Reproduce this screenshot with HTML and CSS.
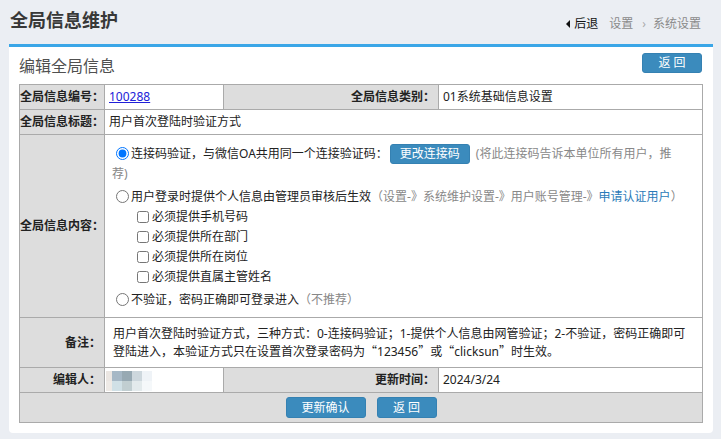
FILE: index.html
```html
<!DOCTYPE html>
<html lang="zh-CN">
  <head>
    <title>全局信息维护</title>
    <meta charset="utf-8">
    <link rel="stylesheet" href="styles.css">
  </head>
  <body>
    <div class="top">
      <h1>全局信息维护</h1>
      <div class="crumb">
        <a class="back"><i></i>后退</a>
        <span>设置</span>
        <span class="sep">›</span>
        <span>系统设置</span>
      </div>
    </div>
    <div class="box">
      <div class="box-head">
        <h2>编辑全局信息</h2>
        <span class="btn btn-top">返 回</span>
      </div>
      <table class="frm">
        <colgroup>
          <col style="width:85px">
          <col style="width:119px">
          <col style="width:215px">
          <col style="width:264px">
        </colgroup>
        <tr>
          <td class="lbl">全局信息编号：</td>
          <td><a href="#" class="id">100288</a></td>
          <td class="lbl">全局信息类别：</td>
          <td>01系统基础信息设置</td>
        </tr>
        <tr>
          <td class="lbl">全局信息标题：</td>
          <td colspan="3">用户首次登陆时验证方式</td>
        </tr>
        <tr>
          <td class="lbl">全局信息内容：</td>
          <td colspan="3" class="opts">
            <div class="opt">
              <input type="radio" name="mode" checked>连接码验证，与微信OA共用同一个连接验证码：<span class="btn btn-code">更改连接码</span><span class="tip">(将此连接码告诉本单位所有用户，推<br>荐)</span>
            </div>
            <div class="opt sp">
              <input type="radio" name="mode">用户登录时提供个人信息由管理员审核后生效<span class="tip">（设置-》系统维护设置-》用户账号管理-》<a class="blue">申请认证用户</a>）</span>
            </div>
            <div class="chk"><input type="checkbox">必须提供手机号码</div>
            <div class="chk"><input type="checkbox">必须提供所在部门</div>
            <div class="chk"><input type="checkbox">必须提供所在岗位</div>
            <div class="chk"><input type="checkbox">必须提供直属主管姓名</div>
            <div class="opt sp">
              <input type="radio" name="mode">不验证，密码正确即可登录进入<span class="tip">（不推荐）</span>
            </div>
          </td>
        </tr>
        <tr>
          <td class="lbl">备注：</td>
          <td colspan="3" class="note">用户首次登陆时验证方式，三种方式：0-连接码验证；1-提供个人信息由网管验证；2-不验证，密码正确即可登陆进入，本验证方式只在设置首次登录密码为<span class="q">“</span>123456<span class="q">”</span>或<span class="q">“</span>clicksun<span class="q">”</span>时生效。</td>
        </tr>
        <tr>
          <td class="lbl">编辑人：</td>
          <td class="who">
            <span class="blur">
              <b style="background:#ebe6e2"></b><b style="background:#a6b8c6"></b><b style="background:#97a9b3"></b><b style="background:#cdd7dd"></b><b style="background:#eff3f7"></b>
              <b style="background:#eeeae6"></b><b style="background:#d0e0e6"></b><b style="background:#c1ced1"></b><b style="background:#e3eaec"></b><b style="background:#f5f8fa"></b>
            </span>
          </td>
          <td class="lbl">更新时间：</td>
          <td>2024/3/24</td>
        </tr>
        <tr>
          <td colspan="4" class="acts">
            <span class="btn btn-save">更新确认</span><span class="btn btn-back">返 回</span>
          </td>
        </tr>
      </table>
    </div>
  </body>
</html>
```

FILE: styles.css
```css
* { margin: 0; padding: 0; box-sizing: border-box; }
body {
  background-color: #ebeef3;
  font-family: "Noto Sans", "Noto Sans CJK SC", sans-serif;
  font-size: 12px;
  color: #222;
}

.top {
  display: flex;
  justify-content: space-between;
  align-items: flex-end;
  padding: 8px 20px 12px 10px;
}
.top h1 {
  font-size: 18px;
  line-height: 24px;
  font-weight: bold;
  color: #383838;
}
.crumb {
  display: flex;
  align-items: center;
  line-height: 16px;
  color: #8a8a8a;
}
.crumb .back {
  display: flex;
  align-items: center;
  color: #111;
  margin-right: 11px;
}
.crumb .back i {
  width: 0;
  height: 0;
  border-right: 4px solid #111;
  border-top: 4px solid transparent;
  border-bottom: 4px solid transparent;
  margin-right: 4px;
}
.crumb .sep {
  margin: 0 7px 0 9px;
  color: #aaa;
}

.box {
  margin: 0 8px 0 9px;
  background-color: #fff;
  border-top: 3px solid #3aa6e7;
  border-radius: 0 0 4px 4px;
  padding: 0 11px 10px 10px;
}
.box-head {
  display: flex;
  justify-content: space-between;
  align-items: flex-start;
  height: 37px;
}
.box-head h2 {
  font-size: 16px;
  font-weight: normal;
  line-height: 20px;
  color: #505050;
  margin-top: 9px;
}

.btn {
  display: inline-block;
  background-color: #3b8bbd;
  border: 1px solid #3581b2;
  border-radius: 3px;
  color: #fff;
  font-size: 12px;
  text-align: center;
  height: 20px;
  line-height: 18px;
}
.btn-top {
  width: 60px;
  margin-top: 6px;
}
.btn-code {
  width: 80px;
  margin: 0 6px 0 2px;
  vertical-align: top;
}
.btn-save, .btn-back {
  height: 21px;
  line-height: 19px;
}
.btn-save { width: 80px; margin-right: 11px; }
.btn-back { width: 60px; }

table.frm {
  width: 100%;
  table-layout: fixed;
  border-collapse: collapse;
  border: 1px solid #aaa;
}
.frm td {
  border: 1px solid #aaa;
  line-height: 24px;
  padding: 0 4px;
  vertical-align: middle;
  white-space: nowrap;
}
.frm td.lbl {
  background-color: #ddd;
  font-weight: bold;
  text-align: right;
  padding: 0 3px 0 0;
}
.frm a.id {
  color: #2020d8;
}

.frm td.opts {
  padding: 9px 8px 7px 7px;
  line-height: 20px;
}
.opt input, .chk input {
  vertical-align: -2px;
}
.opt input {
  margin: 0 2px 0 4px;
  width: 13px;
  height: 13px;
}
.opt.sp {
  margin-top: 3px;
}
.chk {
  padding-left: 25px;
}
.chk input {
  margin: 0 3px 0 0;
  width: 12px;
  height: 12px;
}
.tip {
  color: #888;
}
.tip .blue {
  color: #2b7bb9;
}

.frm td.note {
  white-space: normal;
  line-height: 17px;
  padding: 7px 6px 7px 8px;
}
.note .q {
  font-family: "Noto Sans CJK SC", sans-serif;
}

.frm td.who {
  padding: 0 0 0 1px;
}
.blur {
  display: inline-grid;
  grid-template-columns: 6px 10px 10px 10px 10px;
  grid-template-rows: 10px 10px;
  vertical-align: middle;
  filter: blur(0.6px);
}

.frm td.acts {
  background-color: #ddd;
  text-align: center;
  padding: 4px 0 4px;
  line-height: 21px;
}
.acts .btn {
  vertical-align: top;
}
```
